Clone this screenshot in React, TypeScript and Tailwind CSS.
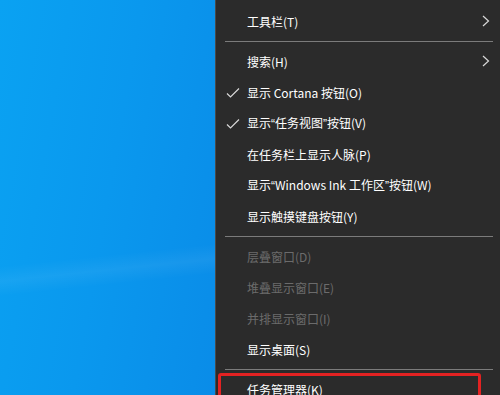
import React from "react";

type Item = { label: React.ReactNode; check?: boolean; sub?: boolean; disabled?: boolean } | "sep";

const Q = ({ c }: { c: string }) => (
  <span style={{ fontFamily: '"Liberation Sans", sans-serif' }}>{c}</span>
);

const items: Item[] = [
  { label: "工具栏(T)", sub: true },
  "sep",
  { label: "搜索(H)", sub: true },
  { label: "显示 Cortana 按钮(O)", check: true },
  {
    label: (
      <>
        显示<Q c="“" />任务视图<Q c="”" />按钮(V)
      </>
    ),
    check: true,
  },
  { label: "在任务栏上显示人脉(P)" },
  {
    label: (
      <>
        显示<Q c="“" />Windows Ink 工作区<Q c="”" />按钮(W)
      </>
    ),
  },
  { label: "显示触摸键盘按钮(Y)" },
  "sep",
  { label: "层叠窗口(D)", disabled: true },
  { label: "堆叠显示窗口(E)", disabled: true },
  { label: "并排显示窗口(I)", disabled: true },
  { label: "显示桌面(S)" },
  "sep",
];

function Check() {
  return (
    <svg width="14" height="12" viewBox="0 0 14 12" className="absolute left-[10px] top-[10px]">
      <polyline points="1,6.5 4.5,10 13,1.5" fill="none" stroke="#d8d8d8" strokeWidth="1.2" />
    </svg>
  );
}

function Chevron() {
  return (
    <svg width="8" height="12" viewBox="0 0 8 12" className="absolute right-[10px] top-[9px]">
      <polyline points="1,1 6.5,6 1,11" fill="none" stroke="#d8d8d8" strokeWidth="1.2" />
    </svg>
  );
}

export default function App() {
  return (
    <div
      className="flex h-[395px] w-[500px] overflow-hidden"
      style={{ fontFamily: '"Noto Sans CJK SC", "Noto Sans", sans-serif' }}
    >
      <div className="relative w-[215px] shrink-0 bg-[linear-gradient(100deg,#0aa2f2_0%,#0a98ee_50%,#0a8ce8_100%)]">
        <div className="absolute left-0 right-0 top-[255px] h-[30px] -skew-y-[6deg] bg-[linear-gradient(180deg,rgba(255,255,255,0)_0%,rgba(255,255,255,0.06)_50%,rgba(255,255,255,0)_100%)]" />
      </div>
      <div className="flex-1 border-l border-[#4a4a4a] bg-[#2b2b2b] pt-[6px] text-[12px] text-white">
        {items.map((it, i) =>
          it === "sep" ? (
            <div key={i} className="flex h-[9px] items-center pl-[9px] pr-[7px]">
              <div className="h-px w-full bg-[#7b7b7b]" />
            </div>
          ) : (
            <div
              key={i}
              className={`relative flex h-[31px] items-center pl-[31px] ${it.disabled ? "text-[#6b6b6b]" : "text-white"}`}
            >
              {it.check && <Check />}
              <span>{it.label}</span>
              {it.sub && <Chevron />}
            </div>
          )
        )}
        <div className="relative flex h-[31px] items-center pl-[31px]">
          <span>任务管理器(K)</span>
          <div className="absolute left-[2px] right-[19px] top-[-1px] bottom-[-10px] rounded-[3px] border-[3px] border-[#e32222]" />
        </div>
      </div>
    </div>
  );
}
